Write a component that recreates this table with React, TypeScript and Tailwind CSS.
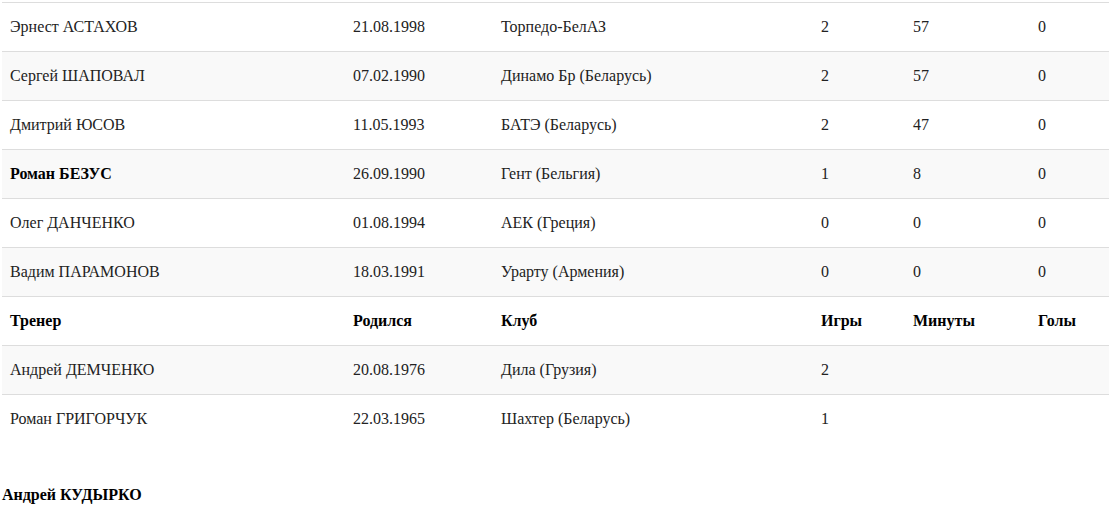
import React from 'react';

type Row = { name: string; born: string; club: string; games: string; minutes: string; goals: string; bold?: boolean; head?: boolean };

const ROWS: Row[] = [
  { name: 'Эрнест АСТАХОВ', born: '21.08.1998', club: 'Торпедо-БелАЗ', games: '2', minutes: '57', goals: '0' },
  { name: 'Сергей ШАПОВАЛ', born: '07.02.1990', club: 'Динамо Бр (Беларусь)', games: '2', minutes: '57', goals: '0' },
  { name: 'Дмитрий ЮСОВ', born: '11.05.1993', club: 'БАТЭ (Беларусь)', games: '2', minutes: '47', goals: '0' },
  { name: 'Роман БЕЗУС', born: '26.09.1990', club: 'Гент (Бельгия)', games: '1', minutes: '8', goals: '0', bold: true },
  { name: 'Олег ДАНЧЕНКО', born: '01.08.1994', club: 'АЕК (Греция)', games: '0', minutes: '0', goals: '0' },
  { name: 'Вадим ПАРАМОНОВ', born: '18.03.1991', club: 'Урарту (Армения)', games: '0', minutes: '0', goals: '0' },
  { name: 'Тренер', born: 'Родился', club: 'Клуб', games: 'Игры', minutes: 'Минуты', goals: 'Голы', head: true },
  { name: 'Андрей ДЕМЧЕНКО', born: '20.08.1976', club: 'Дила (Грузия)', games: '2', minutes: '', goals: '' },
  { name: 'Роман ГРИГОРЧУК', born: '22.03.1965', club: 'Шахтер (Беларусь)', games: '1', minutes: '', goals: '' },
];

export default function App() {
  return (
    <div className="w-[1112px] h-[510px] overflow-hidden bg-white text-[#222] text-[16px] leading-[20px] font-['Liberation_Serif',serif]">
      <div className="pt-[2px] pl-[2px] w-[1109px]">
        <table className="w-full table-fixed border-collapse">
          <colgroup>
            <col className="w-[343px]" />
            <col className="w-[148px]" />
            <col className="w-[320px]" />
            <col className="w-[92px]" />
            <col className="w-[125px]" />
            <col className="w-[79px]" />
          </colgroup>
          <tbody>
            {ROWS.map((r, i) => {
              const cell = `px-2 h-[49px] align-middle text-left ${r.head ? 'font-bold text-black' : ''}`;
              return (
                <tr key={i} className={`border-t border-[#dddddd] ${i % 2 === 1 ? 'bg-[#f9f9f9]' : 'bg-white'}`}>
                  <td className={`${cell} ${r.bold ? 'font-bold text-black' : ''}`}>{r.name}</td>
                  <td className={cell}>{r.born}</td>
                  <td className={cell}>{r.club}</td>
                  <td className={cell}>{r.games}</td>
                  <td className={cell}>{r.minutes}</td>
                  <td className={cell}>{r.goals}</td>
                </tr>
              );
            })}
          </tbody>
        </table>
      </div>
      <div className="pl-[2px] mt-[41px] font-bold text-black">Андрей КУДЫРКО</div>
    </div>
  );
}
